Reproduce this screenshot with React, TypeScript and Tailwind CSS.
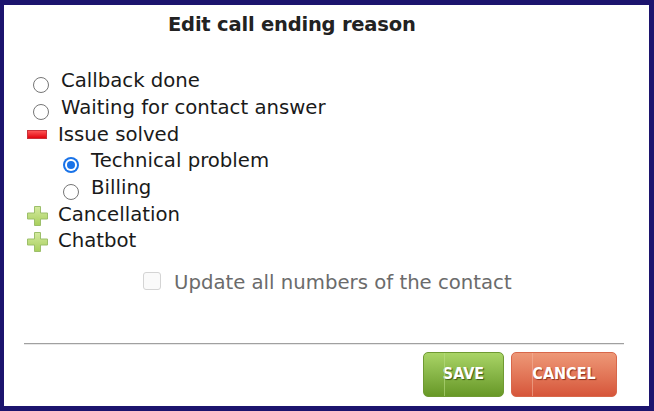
import * as React from 'react';

type Node = {
  label: string;
  kind: 'radio' | 'open' | 'closed';
  checked?: boolean;
  children?: Node[];
};

const tree: Node[] = [
  { label: 'Callback done', kind: 'radio' },
  { label: 'Waiting for contact answer', kind: 'radio' },
  {
    label: 'Issue solved',
    kind: 'open',
    children: [
      { label: 'Technical problem', kind: 'radio', checked: true },
      { label: 'Billing', kind: 'radio' },
    ],
  },
  { label: 'Cancellation', kind: 'closed' },
  { label: 'Chatbot', kind: 'closed' },
];

function Radio({ checked }: { checked?: boolean }) {
  if (checked) {
    return (
      <span className="mt-[8px] flex h-[16px] w-[16px] items-center justify-center rounded-full bg-[#1a73e8]">
        <span className="flex h-[12px] w-[12px] items-center justify-center rounded-full bg-white">
          <span className="h-[8px] w-[8px] rounded-full bg-[#1a73e8]" />
        </span>
      </span>
    );
  }
  return <span className="mt-[8px] h-[16px] w-[16px] rounded-full border border-[#767676] bg-white" />;
}

function MinusIcon() {
  return (
    <svg width="20" height="9" viewBox="0 0 20 9">
      <defs>
        <linearGradient id="mg" x1="0" y1="0" x2="0" y2="1">
          <stop offset="0" stopColor="#ff5a5a" />
          <stop offset="1" stopColor="#e0000a" />
        </linearGradient>
      </defs>
      <rect x="0.5" y="0.5" width="19" height="8" fill="url(#mg)" stroke="#c8323a" />
    </svg>
  );
}

function PlusIcon() {
  return (
    <svg width="21" height="20" viewBox="0 0 21 20">
      <defs>
        <linearGradient id="pg" x1="0" y1="0" x2="0" y2="1">
          <stop offset="0" stopColor="#d4eaa0" />
          <stop offset="1" stopColor="#a8cf5c" />
        </linearGradient>
      </defs>
      <path
        d="M7.5 0.5h6v6.5h7v6h-7v6.5h-6v-6.5h-7v-6h7z"
        fill="url(#pg)"
        stroke="#9cbf6a"
      />
    </svg>
  );
}

function Row({ node, depth }: { node: Node; depth: number }) {
  return (
    <>
      <div className="flex h-[26.67px] items-center" style={{ paddingLeft: depth * 30 }}>
        {node.kind === 'radio' && (
          <div className="flex w-[34px] items-center pl-[6px]">
            <Radio checked={node.checked} />
          </div>
        )}
        {node.kind === 'open' && (
          <div className="flex w-[31px] items-center">
            <MinusIcon />
          </div>
        )}
        {node.kind === 'closed' && (
          <div className="flex w-[31px] items-center pt-[2px]">
            <PlusIcon />
          </div>
        )}
        <span>{node.label}</span>
      </div>
      {node.children?.map(c => <Row key={c.label} node={c} depth={depth + 1} />)}
    </>
  );
}

export default function App() {
  return (
    <div
      className="flex h-[411px] w-[654px] flex-col border-b-[5px] border-l-4 border-r-[5px] border-t-[5px] border-[#1c146e] bg-white text-[#1a1a1a]"
      style={{ fontFamily: '"DejaVu Sans", Verdana, sans-serif' }}
    >
      <div className="mt-[8px] pl-[164px] text-[19.5px] font-bold leading-[24px] tracking-[-0.2px] text-[#222]">
        Edit call ending reason
      </div>

      <div className="mt-[31px] pl-[23px] text-[19.7px] leading-[24px]">
        {tree.map(n => (
          <Row key={n.label} node={n} depth={0} />
        ))}
      </div>

      <div className="mt-[16px] flex items-center pl-[139px] text-[19.7px] leading-[24px] text-[#6b6b6b]">
        <span className="mr-[13px] mt-[-4px] h-[18px] w-[18px] rounded-[3px] border border-[#d4d4d4] bg-[#fafafa]" />
        <span>Update all numbers of the contact</span>
      </div>

      <div className="ml-[20px] mr-[25px] mt-[48px] h-[2px] border-t border-[#a0a0a0] bg-[#e8e8e8]" />

      <div
        className="mt-[7px] flex justify-end gap-[7px] pr-[32px] text-[16px] font-bold text-white"
        style={{ fontFamily: '"DejaVu Sans Condensed", "DejaVu Sans", sans-serif' }}
      >
        <button className="relative h-[45px] w-[81px] rounded-[5px] border border-[#6f9a32] bg-gradient-to-b from-[#a9d466] to-[#679826] [text-shadow:1px_1px_1px_#3c5a14]">
          <span className="absolute bottom-0 left-[20px] top-0 w-px bg-[#b9dc84] opacity-60" />
          SAVE
        </button>
        <button className="relative h-[45px] w-[106px] rounded-[5px] border border-[#d8674a] bg-gradient-to-b from-[#ed9877] to-[#d6553a] [text-shadow:1px_1px_1px_#8c3220]">
          <span className="absolute bottom-0 left-[20px] top-0 w-px bg-[#f3b39b] opacity-60" />
          CANCEL
        </button>
      </div>
    </div>
  );
}
